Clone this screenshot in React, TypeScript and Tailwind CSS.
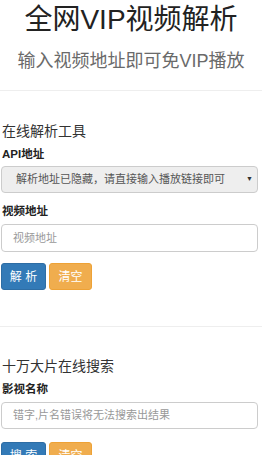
import React from "react";

const font = { fontFamily: '"Liberation Sans","Noto Sans CJK SC",sans-serif' };

function Btn({ children, color }: { children: React.ReactNode; color: "blue" | "orange" }) {
  return (
    <button
      className={
        "h-[27px] rounded-[3px] text-[12px] leading-[27px] text-white border " +
        (color === "blue"
          ? "w-[45px] bg-[#337ab7] border-[#2e6da4]"
          : "w-[43px] bg-[#f0ad4e] border-[#eea236]")
      }
    >
      {children}
    </button>
  );
}

export default function App() {
  return (
    <div className="w-[262px] h-[455px] overflow-hidden bg-white text-[#333]" style={font}>
      <div className="h-[91px] border-b border-[#eeeeee]">
        <div className="h-[40px] text-center text-[28px] leading-[40px] text-[#222]">全网VIP视频解析</div>
        <div className="mt-[1px] h-[40px] text-center text-[18px] leading-[40px] text-[#6a6a6a]">
          输入视频地址即可免VIP播放
        </div>
      </div>

      <div className="px-[2px]">
        <div className="mt-[30px] h-[20px] text-[14px] leading-[20px]">在线解析工具</div>
        <div className="mt-[5px] h-[16px] text-[11.5px] leading-[16px] font-bold text-[#222]">API地址</div>
        <div className="mt-[4px] -ml-[1px] w-[257px] h-[27px] rounded-[4px] border border-[#cccccc] bg-[#eeeeee] flex items-center pl-[14px] pr-[4px] text-[11px] text-[#555]">
          <span className="flex-1">解析地址已隐藏，请直接输入播放链接即可</span>
          <span className="text-[7px] text-[#333]">▼</span>
        </div>
        <div className="mt-[10px] h-[16px] text-[11.5px] leading-[16px] font-bold text-[#222]">视频地址</div>
        <div className="mt-[5px] -ml-[1px] w-[257px] h-[28px] rounded-[4px] border border-[#cccccc] bg-white flex items-center pl-[11px] text-[11px] text-[#999]">
          视频地址
        </div>
        <div className="mt-[11px] -ml-[1px] flex gap-[3px]">
          <Btn color="blue">解 析</Btn>
          <Btn color="orange">清空</Btn>
        </div>
      </div>

      <div className="mt-[36px] border-b border-[#eeeeee]" />

      <div className="px-[2px]">
        <div className="mt-[29px] h-[20px] text-[14px] leading-[20px]">十万大片在线搜索</div>
        <div className="mt-[5px] h-[16px] text-[11.5px] leading-[16px] font-bold text-[#222]">影视名称</div>
        <div className="mt-[5px] -ml-[1px] w-[257px] h-[27px] rounded-[4px] border border-[#cccccc] bg-white flex items-center pl-[11px] text-[11px] text-[#999]">
          错字,片名错误将无法搜索出结果
        </div>
        <div className="mt-[13px] -ml-[1px] flex gap-[3px]">
          <Btn color="blue">搜 索</Btn>
          <Btn color="orange">清空</Btn>
        </div>
      </div>
    </div>
  );
}
